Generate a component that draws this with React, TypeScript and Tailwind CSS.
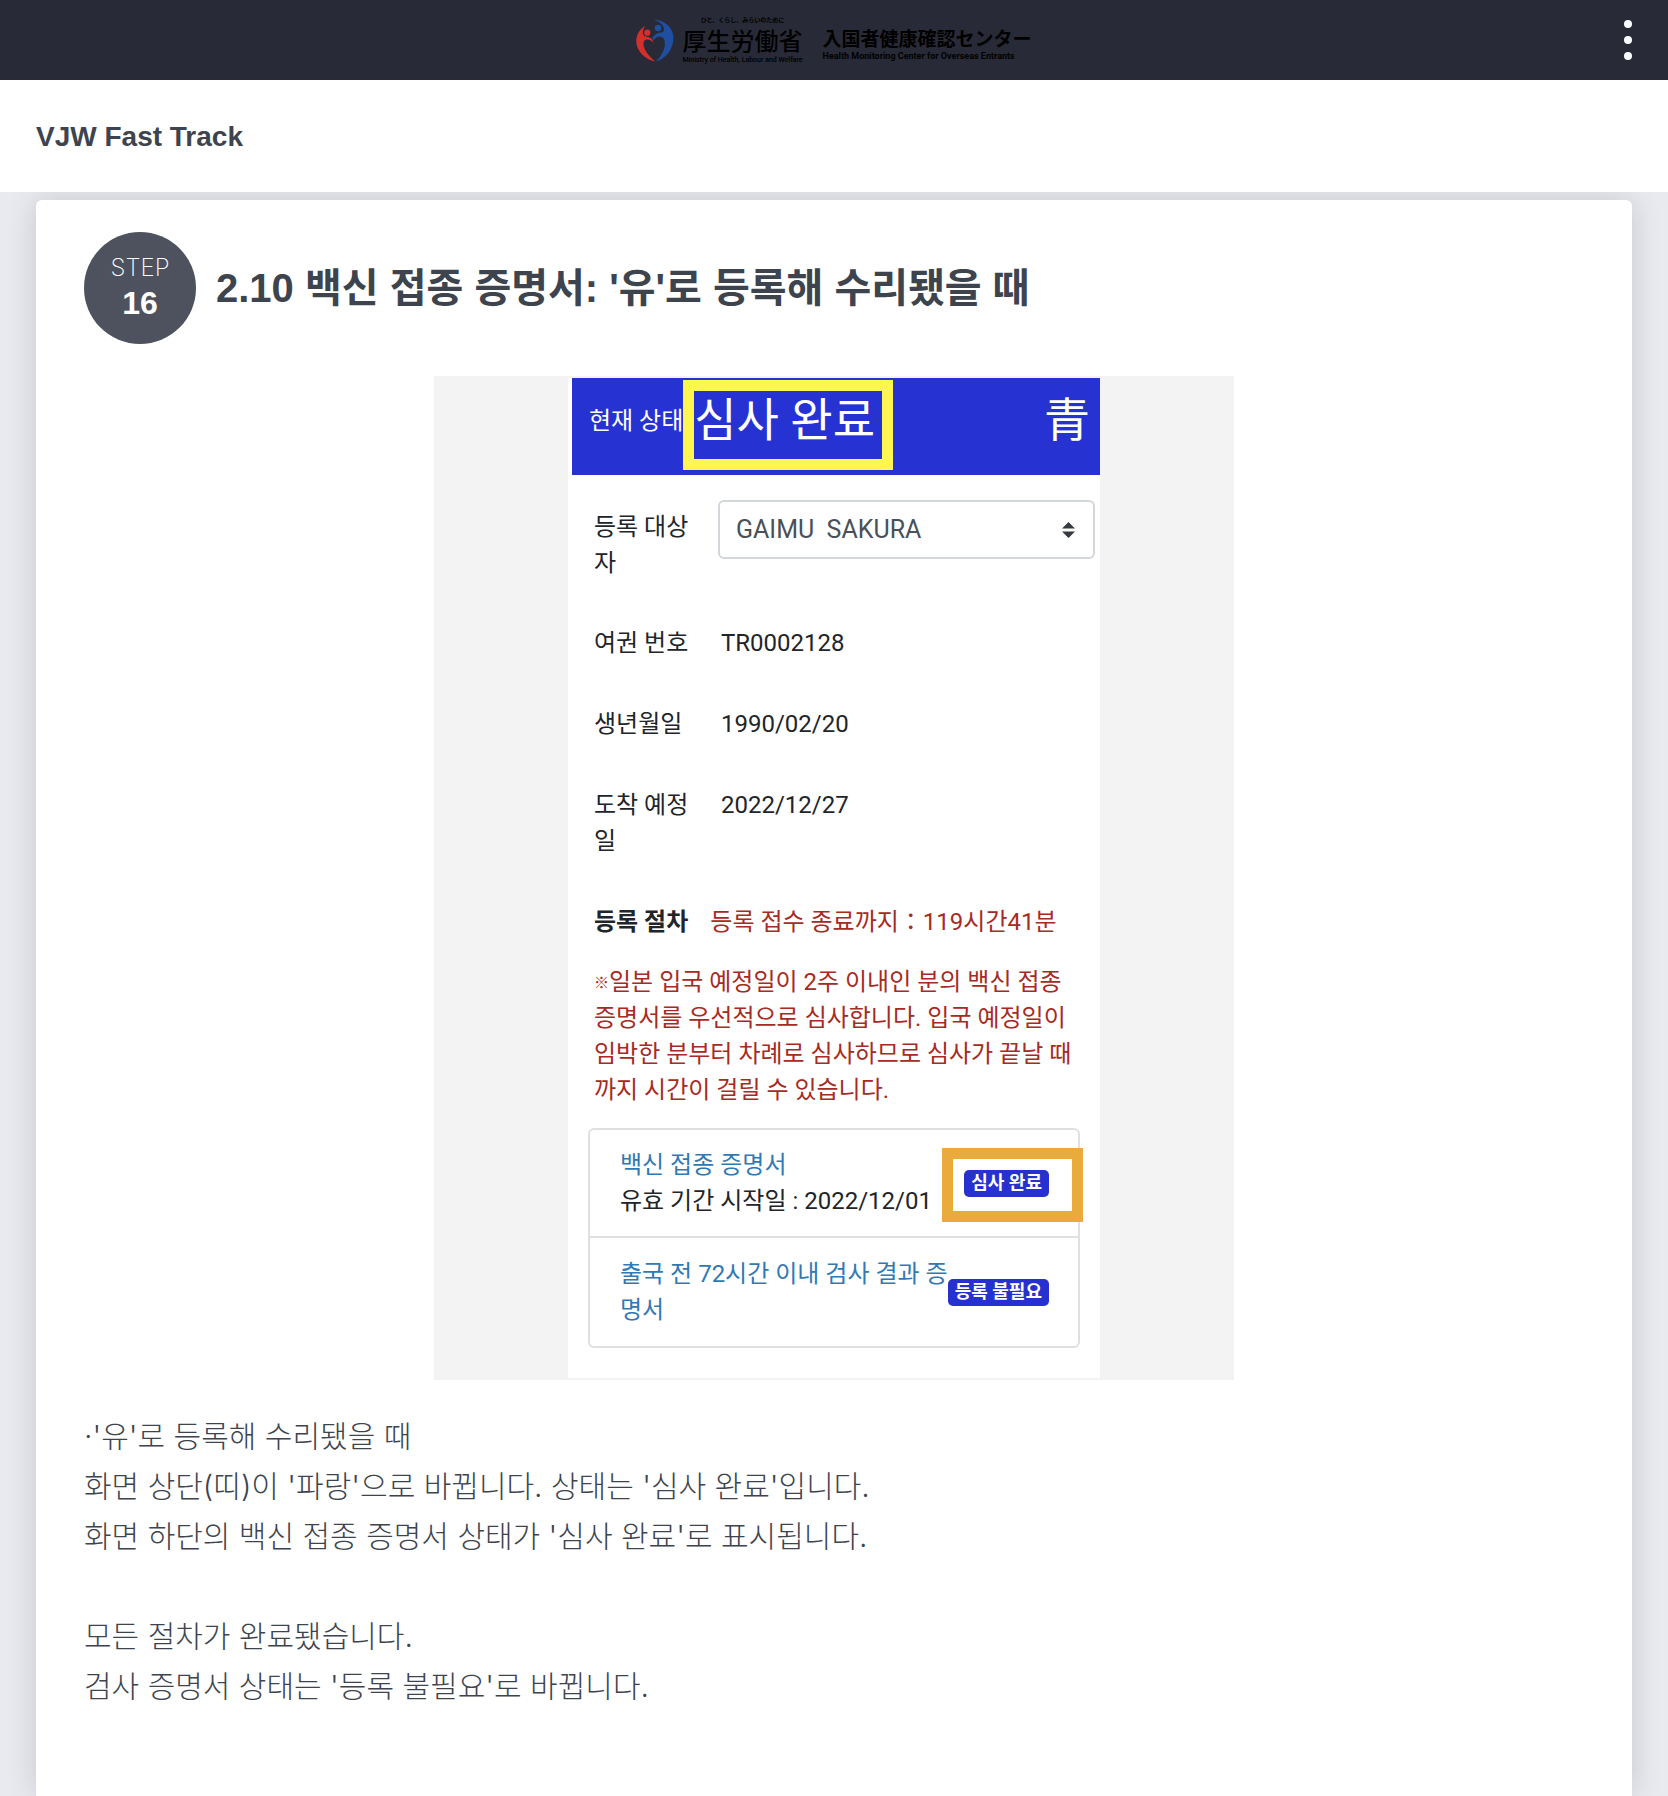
import { useState } from "react";
import type { ReactNode } from "react";

const latin = "font-['Liberation_Sans','Noto_Sans_CJK_KR',sans-serif]";
const phoneFont = "font-['Roboto','Noto_Sans_CJK_KR',sans-serif]";
const japanese = "font-['Noto_Sans_CJK_JP',sans-serif]";

function HeartLogo() {
  return (
    <svg viewBox="0 0 38 43" className="h-[43px] w-[38px] shrink-0" aria-hidden="true">
      <path
        d="M17.7 0.6C29 1 37.6 9 37.4 19.5C37.2 30.5 30 39.5 19.8 42.6C24.5 38 28 32.5 28.8 26.5C29.4 21 27.6 18 24 17.6C21.2 17.5 19 19.2 17.4 21.6L16 19.4C18 15.6 21.6 13.6 26 13.6C30.4 11.5 28 4 17.7 0.6Z"
        fill="#1f4f9e"
      />
      <circle cx="22" cy="9" r="3.2" fill="#1f4f9e" />
      <path
        d="M9.5 6.8C4 9.5 0 16 0.3 23C0.6 32 9 40.5 19.4 42.7C13.5 38 8.6 32 7.6 26.6C7 22.4 8.6 20.4 11.4 20.4C14 20.6 15.6 21.8 17.2 23.4C16.4 19.6 13.4 17.8 9.8 17.6C6.2 17 5.8 11.5 9.5 6.8Z"
        fill="#d52f2c"
      />
      <circle cx="11.3" cy="13.7" r="3.1" fill="#d52f2c" />
    </svg>
  );
}

function Header() {
  return (
    <header className="flex h-20 items-center bg-[#282a37] px-9">
      <div className="w-9" />
      <a href="#top" className={`mx-auto flex items-center text-black ${japanese}`}>
        <HeartLogo />
        <span className="ml-2 flex flex-col items-center whitespace-nowrap">
          <span className="text-[6px] leading-[8px] font-bold">ひと、くらし、みらいのために</span>
          <span className="text-[24px] leading-[32px] font-medium">厚生労働省</span>
          <span className="font-['Roboto',sans-serif] text-[7px] leading-[8px] font-medium">
            Ministry of Health, Labour and Welfare
          </span>
        </span>
        <span className="ml-5 flex flex-col whitespace-nowrap pt-2">
          <span className="text-[19px] leading-[24px] font-bold">入国者健康確認センター</span>
          <span className="font-['Roboto',sans-serif] text-[9px] leading-[12px] font-bold">
            Health Monitoring Center for Overseas Entrants
          </span>
        </span>
      </a>
      <button type="button" aria-label="메뉴" className="flex w-9 flex-col items-end gap-2">
        <span className="size-2 rounded-full bg-white" />
        <span className="size-2 rounded-full bg-white" />
        <span className="size-2 rounded-full bg-white" />
      </button>
    </header>
  );
}

function Row({ label, children }: { label: string; children: ReactNode }) {
  return (
    <div className="flex pb-[45px]">
      <dt className="w-[127px] shrink-0 pr-6 break-all">{label}</dt>
      <dd>{children}</dd>
    </div>
  );
}

function Badge({ children, marked = false }: { children: ReactNode; marked?: boolean }) {
  return (
    <span className="relative flex h-[27px] shrink-0 items-center rounded-[5px] bg-[#2731cf] px-[7px] text-[18px] font-bold whitespace-nowrap text-white">
      {children}
      {marked && (
        <span className="absolute -top-[22px] -right-[34px] -bottom-[25px] -left-[22px] border-[11px] border-[#e8ab3c]" />
      )}
    </span>
  );
}

function StatusScreen() {
  const [person, setPerson] = useState("sakura");
  return (
    <div className={`mx-auto w-[532px] max-w-full bg-white pb-[30px] text-[24px] leading-[36px] text-[#212529] ${phoneFont}`}>
      <div className="ml-1 flex h-[97px] items-start bg-[#2632d2] pt-0.5 pr-[10px] pl-[17px] text-white">
        <span className="pt-[23px] whitespace-nowrap">현재 상태</span>
        <strong className="h-[90px] w-[210px] border-[11px] border-[#fff651] text-[46px] leading-[58px] font-normal whitespace-nowrap">
          심사 완료
        </strong>
        <span className="ml-auto pt-[10px] text-[46px] leading-[60px]">青</span>
      </div>

      <div className="pt-[25px] pl-[26px]">
        <div className="flex pr-[5px] pb-[44px]">
          <label htmlFor="person" className="w-[124px] shrink-0 pt-[9px] pr-6 break-all">
            등록 대상자
          </label>
          <div className="relative flex-1">
            <select
              id="person"
              value={person}
              onChange={(e) => setPerson(e.target.value)}
              className="h-[59px] w-full appearance-none rounded-md border-2 border-[#d3d6db] bg-white pl-4 text-[25px] text-[#495057]"
            >
              <option value="sakura">GAIMU&nbsp; SAKURA</option>
            </select>
            <svg viewBox="0 0 13 16" className="pointer-events-none absolute top-[22px] right-5 h-4 w-[13px]" aria-hidden="true">
              <path d="M6.5 0L13 6.5H0ZM6.5 16L13 9.5H0Z" fill="#343a40" />
            </svg>
          </div>
        </div>
        <dl>
          <Row label="여권 번호">TR0002128</Row>
          <Row label="생년월일">1990/02/20</Row>
          <Row label="도착 예정일">2022/12/27</Row>
        </dl>
        <p className="flex gap-[22px] text-[#a62b24]">
          <strong className="whitespace-nowrap text-[#212529]">등록 절차</strong>
          <span className="whitespace-nowrap">등록 접수 종료까지：119시간41분</span>
        </p>
        <p className="pt-6 whitespace-nowrap text-[#a62b24]">
          <span className="align-[2px] text-[15px] leading-none font-black">※</span>일본 입국 예정일이 2주 이내인 분의 백신 접종
          <br />
          증명서를 우선적으로 심사합니다. 입국 예정일이
          <br />
          임박한 분부터 차례로 심사하므로 심사가 끝날 때
          <br />
          까지 시간이 걸릴 수 있습니다.
        </p>
      </div>

      <ul className="mt-5 mr-5 ml-5 divide-y-2 divide-[#e0e0e0] rounded-md border-2 border-[#e0e0e0]">
        <li className="flex items-center justify-between py-[17px] pr-[29px] pl-[30px]">
          <div className="whitespace-nowrap">
            <a href="#vaccine" className="text-[#3079b5]">백신 접종 증명서</a>
            <p>유효 기간 시작일 : 2022/12/01</p>
          </div>
          <Badge marked>심사 완료</Badge>
        </li>
        <li className="flex items-center justify-between py-[18px] pr-[29px] pl-[30px]">
          <a href="#test" className="whitespace-nowrap text-[#3079b5]">
            출국 전 72시간 이내 검사 결과 증
            <br />
            명서
          </a>
          <Badge>등록 불필요</Badge>
        </li>
      </ul>
    </div>
  );
}

export default function App() {
  return (
    <div id="top" lang="ko" className={`flex min-h-screen flex-col bg-[#e9eaef] text-[#3d444e] ${latin}`}>
      <Header />
      <div className="flex h-28 items-center bg-white px-9 pt-0.5">
        <h1 className="text-[28px] font-bold">VJW Fast Track</h1>
      </div>
      <main className="flex flex-1 flex-col overflow-hidden px-9 pt-2">
        <article className="flex-1 rounded-t-md bg-white px-12 pt-8 shadow-[0_0_30px_rgba(0,0,0,0.15)]">
          <div className="flex items-center gap-5">
            <div className="flex size-28 shrink-0 flex-col items-center justify-center rounded-full bg-[#4e525e] pb-0.5 text-white">
              <span className="font-['Inter',sans-serif] text-[24px] leading-[32px] font-extralight">STEP</span>
              <span className="text-[32px] leading-[38px] font-bold">16</span>
            </div>
            <h2 className="text-[40px] leading-[56px] font-bold">2.10 백신 접종 증명서: '유'로 등록해 수리됐을 때</h2>
          </div>
          <figure className="mx-auto mt-8 w-[800px] max-w-full bg-[#f3f3f3] py-0.5">
            <StatusScreen />
          </figure>
          <div className="pt-[31px] font-['Inter','Noto_Sans_CJK_KR',sans-serif] text-[30px] leading-[50px] font-light">
            <p>·'유'로 등록해 수리됐을 때</p>
            <p>화면 상단(띠)이 '파랑'으로 바뀝니다. 상태는 '심사 완료'입니다.</p>
            <p>화면 하단의 백신 접종 증명서 상태가 '심사 완료'로 표시됩니다.</p>
            <p className="pt-[50px]">모든 절차가 완료됐습니다.</p>
            <p>검사 증명서 상태는 '등록 불필요'로 바뀝니다.</p>
          </div>
        </article>
      </main>
    </div>
  );
}
